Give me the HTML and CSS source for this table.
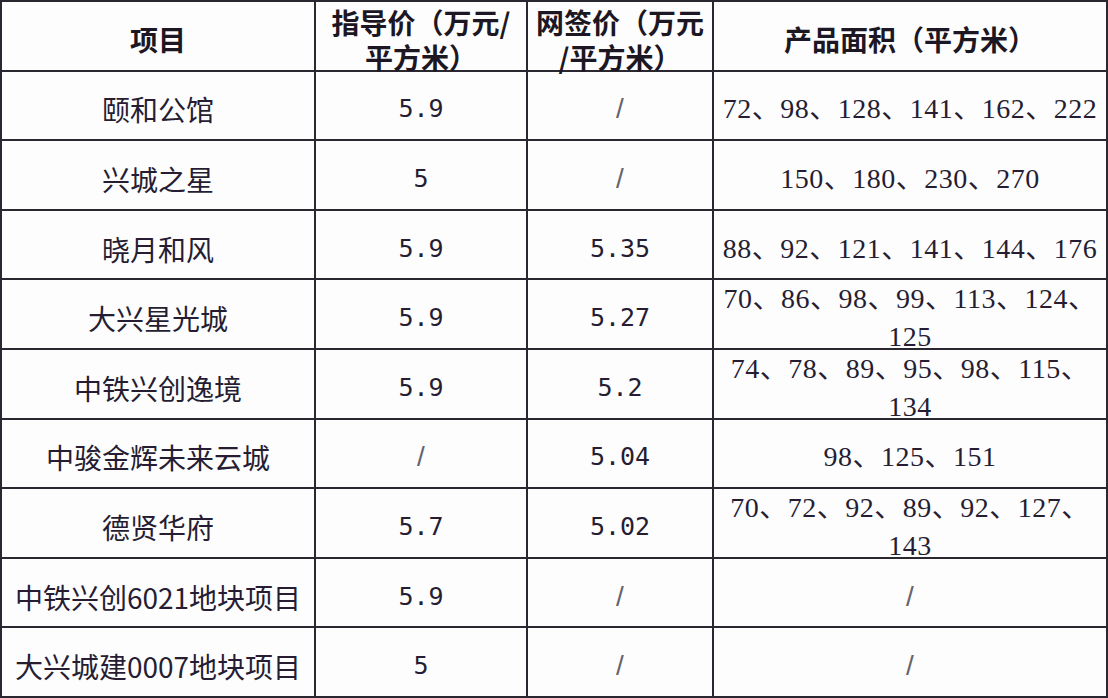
FILE: index.html
```html
<!DOCTYPE html>
<html lang="zh-CN">
<head>
<meta charset="utf-8">
<title>项目价格表</title>
<link rel="stylesheet" href="styles.css">
</head>
<body>
<div class="sheet">
  <div class="cell head">项目</div>
  <div class="cell head">指导价（万元/<br>平方米）</div>
  <div class="cell head">网签价（万元<br>/平方米）</div>
  <div class="cell head">产品面积（平方米）</div>

  <div class="cell name">颐和公馆</div>
  <div class="cell num">5.9</div>
  <div class="cell slash">/</div>
  <div class="cell area">72、98、128、141、162、222</div>

  <div class="cell name">兴城之星</div>
  <div class="cell num">5</div>
  <div class="cell slash">/</div>
  <div class="cell area">150、180、230、270</div>

  <div class="cell name">晓月和风</div>
  <div class="cell num">5.9</div>
  <div class="cell num">5.35</div>
  <div class="cell area">88、92、121、141、144、176</div>

  <div class="cell name">大兴星光城</div>
  <div class="cell num">5.9</div>
  <div class="cell num">5.27</div>
  <div class="cell area">70、86、98、99、113、124、125</div>

  <div class="cell name">中铁兴创逸境</div>
  <div class="cell num">5.9</div>
  <div class="cell num">5.2</div>
  <div class="cell area">74、78、89、95、98、115、134</div>

  <div class="cell name">中骏金辉未来云城</div>
  <div class="cell slash">/</div>
  <div class="cell num">5.04</div>
  <div class="cell area">98、125、151</div>

  <div class="cell name">德贤华府</div>
  <div class="cell num">5.7</div>
  <div class="cell num">5.02</div>
  <div class="cell area">70、72、92、89、92、127、143</div>

  <div class="cell name">中铁兴创6021地块项目</div>
  <div class="cell num">5.9</div>
  <div class="cell slash">/</div>
  <div class="cell slash">/</div>

  <div class="cell name">大兴城建0007地块项目</div>
  <div class="cell num">5</div>
  <div class="cell slash">/</div>
  <div class="cell slash">/</div>
</div>
</body>
</html>
```

FILE: styles.css
```css
html, body {
  margin: 0;
  padding: 0;
  background: #fdfdfe;
}

body {
  width: 1108px;
  height: 698px;
  overflow: hidden;
  color: #261d33;
  font-family: "Noto Sans CJK SC", "Noto Sans", sans-serif;
}

.sheet {
  display: grid;
  grid-template-columns: 314px 212px 186px 394px;
  grid-auto-rows: 69.6px;
  border-left: 2px solid #2b2730;
  border-top: 2px solid #2b2730;
  width: 1106px;
}

.cell {
  box-sizing: border-box;
  border-right: 2px solid #2b2730;
  border-bottom: 2px solid #2b2730;
  display: flex;
  align-items: center;
  justify-content: center;
  text-align: center;
  padding: 8px 10px 0;
  font-size: 28px;
  line-height: 38px;
}

.head {
  font-weight: 700;
  line-height: 35px;
  padding: 8px 4px 0;
  white-space: nowrap;
  color: #1c1722;
}

.name {
  font-size: 28px;
  padding: 8px 4px 0;
  white-space: nowrap;
}

.num {
  font-family: "DejaVu Sans Mono", monospace;
  font-size: 25px;
}

.slash {
  font-family: "Liberation Sans", sans-serif;
  font-size: 28px;
  color: #67636d;
}

.area {
  font-family: "Liberation Serif", "Noto Sans CJK SC", serif;
  font-size: 28px;
  letter-spacing: 0.5px;
  padding: 8px 6px 0;
}
```
